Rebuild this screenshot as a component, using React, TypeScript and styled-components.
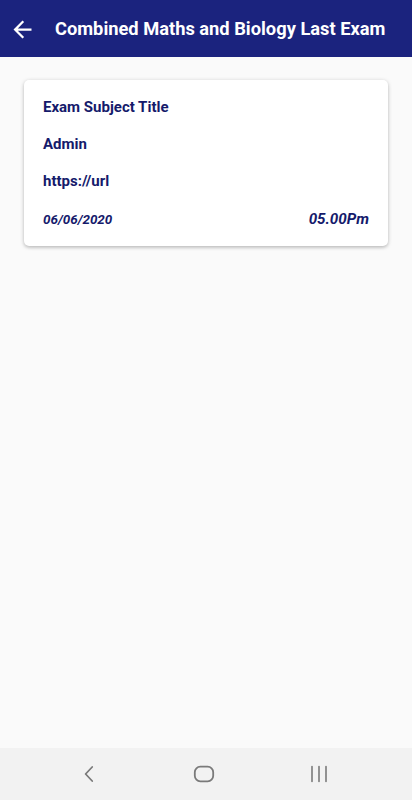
import React from "react";
import styled, { createGlobalStyle } from "styled-components";

const GlobalStyle = createGlobalStyle`
  html, body {
    margin: 0;
    padding: 0;
    background: #fafafa;
    font-family: Roboto, "Liberation Sans", sans-serif;
  }
`;

const Screen = styled.div`
  width: 412px;
  height: 800px;
  display: flex;
  flex-direction: column;
  background: #fafafa;
`;

const AppBar = styled.header`
  height: 57px;
  flex-shrink: 0;
  background: #1b237e;
  display: flex;
  align-items: center;
  padding-left: 9px;
  gap: 19px;
`;

const BackButton = styled.button`
  border: 0;
  background: none;
  padding: 0;
  width: 27px;
  height: 27px;
  display: flex;
  align-items: center;
  justify-content: center;
  color: #fff;
  margin-top: 1px;
`;

const Title = styled.h1`
  margin: 0;
  color: #fff;
  font-size: 18.3px;
  font-weight: 700;
  white-space: nowrap;
`;

const Content = styled.main`
  flex: 1;
  padding: 23px 24px;
`;

const Card = styled.div`
  background: #fff;
  border-radius: 5px;
  box-shadow: 0 1px 4px rgba(0, 0, 0, 0.22), 0 2px 3px rgba(0, 0, 0, 0.08);
  padding: 19px 19px 18px;
  display: flex;
  flex-direction: column;
  gap: 21px;
`;

const Line = styled.div`
  color: #151a6b;
  font-size: 15px;
  font-weight: 700;
  line-height: 16px;
`;

const Footer = styled.div`
  display: flex;
  justify-content: space-between;
  align-items: baseline;
  color: #151a6b;
  font-style: italic;
  font-weight: 700;
`;

const Stamp = styled.span<{ $size: number }>`
  font-size: ${(p) => p.$size}px;
`;

const NavBar = styled.nav`
  height: 52px;
  flex-shrink: 0;
  background: #f2f2f2;
  display: grid;
  grid-template-columns: repeat(3, 115px);
  justify-content: center;
  align-items: center;
  justify-items: center;
  padding-right: 5px;
`;

const NavIcon = styled.svg`
  width: 24px;
  height: 24px;
  stroke: #7a7a7a;
  fill: none;
  stroke-linecap: round;
  stroke-linejoin: round;
`;

export default function App() {
  return (
    <>
      <GlobalStyle />
      <Screen>
        <AppBar>
          <BackButton aria-label="Back">
            <svg width="27" height="27" viewBox="0 0 24 24" fill="#fff">
              <path d="M20 11H7.83l5.59-5.59L12 4l-8 8 8 8 1.41-1.41L7.83 13H20v-2z" />
            </svg>
          </BackButton>
          <Title>Combined Maths and Biology Last Exam</Title>
        </AppBar>
        <Content>
          <Card>
            <Line>Exam Subject Title</Line>
            <Line>Admin</Line>
            <Line>https://url</Line>
            <Footer>
              <Stamp $size={13.4}>06/06/2020</Stamp>
              <Stamp $size={15.2}>05.00Pm</Stamp>
            </Footer>
          </Card>
        </Content>
        <NavBar>
          <NavIcon viewBox="0 0 24 24" strokeWidth="1.8">
            <path d="M15.2 5L8.6 12l6.6 7" />
          </NavIcon>
          <NavIcon viewBox="0 0 24 24" strokeWidth="1.8">
            <rect x="2.8" y="4.7" width="18.4" height="14.6" rx="5.5" />
          </NavIcon>
          <NavIcon viewBox="0 0 24 24" strokeWidth="1.6">
            <path d="M5 4.5v15M12 4.5v15M19 4.5v15" />
          </NavIcon>
        </NavBar>
      </Screen>
    </>
  );
}
